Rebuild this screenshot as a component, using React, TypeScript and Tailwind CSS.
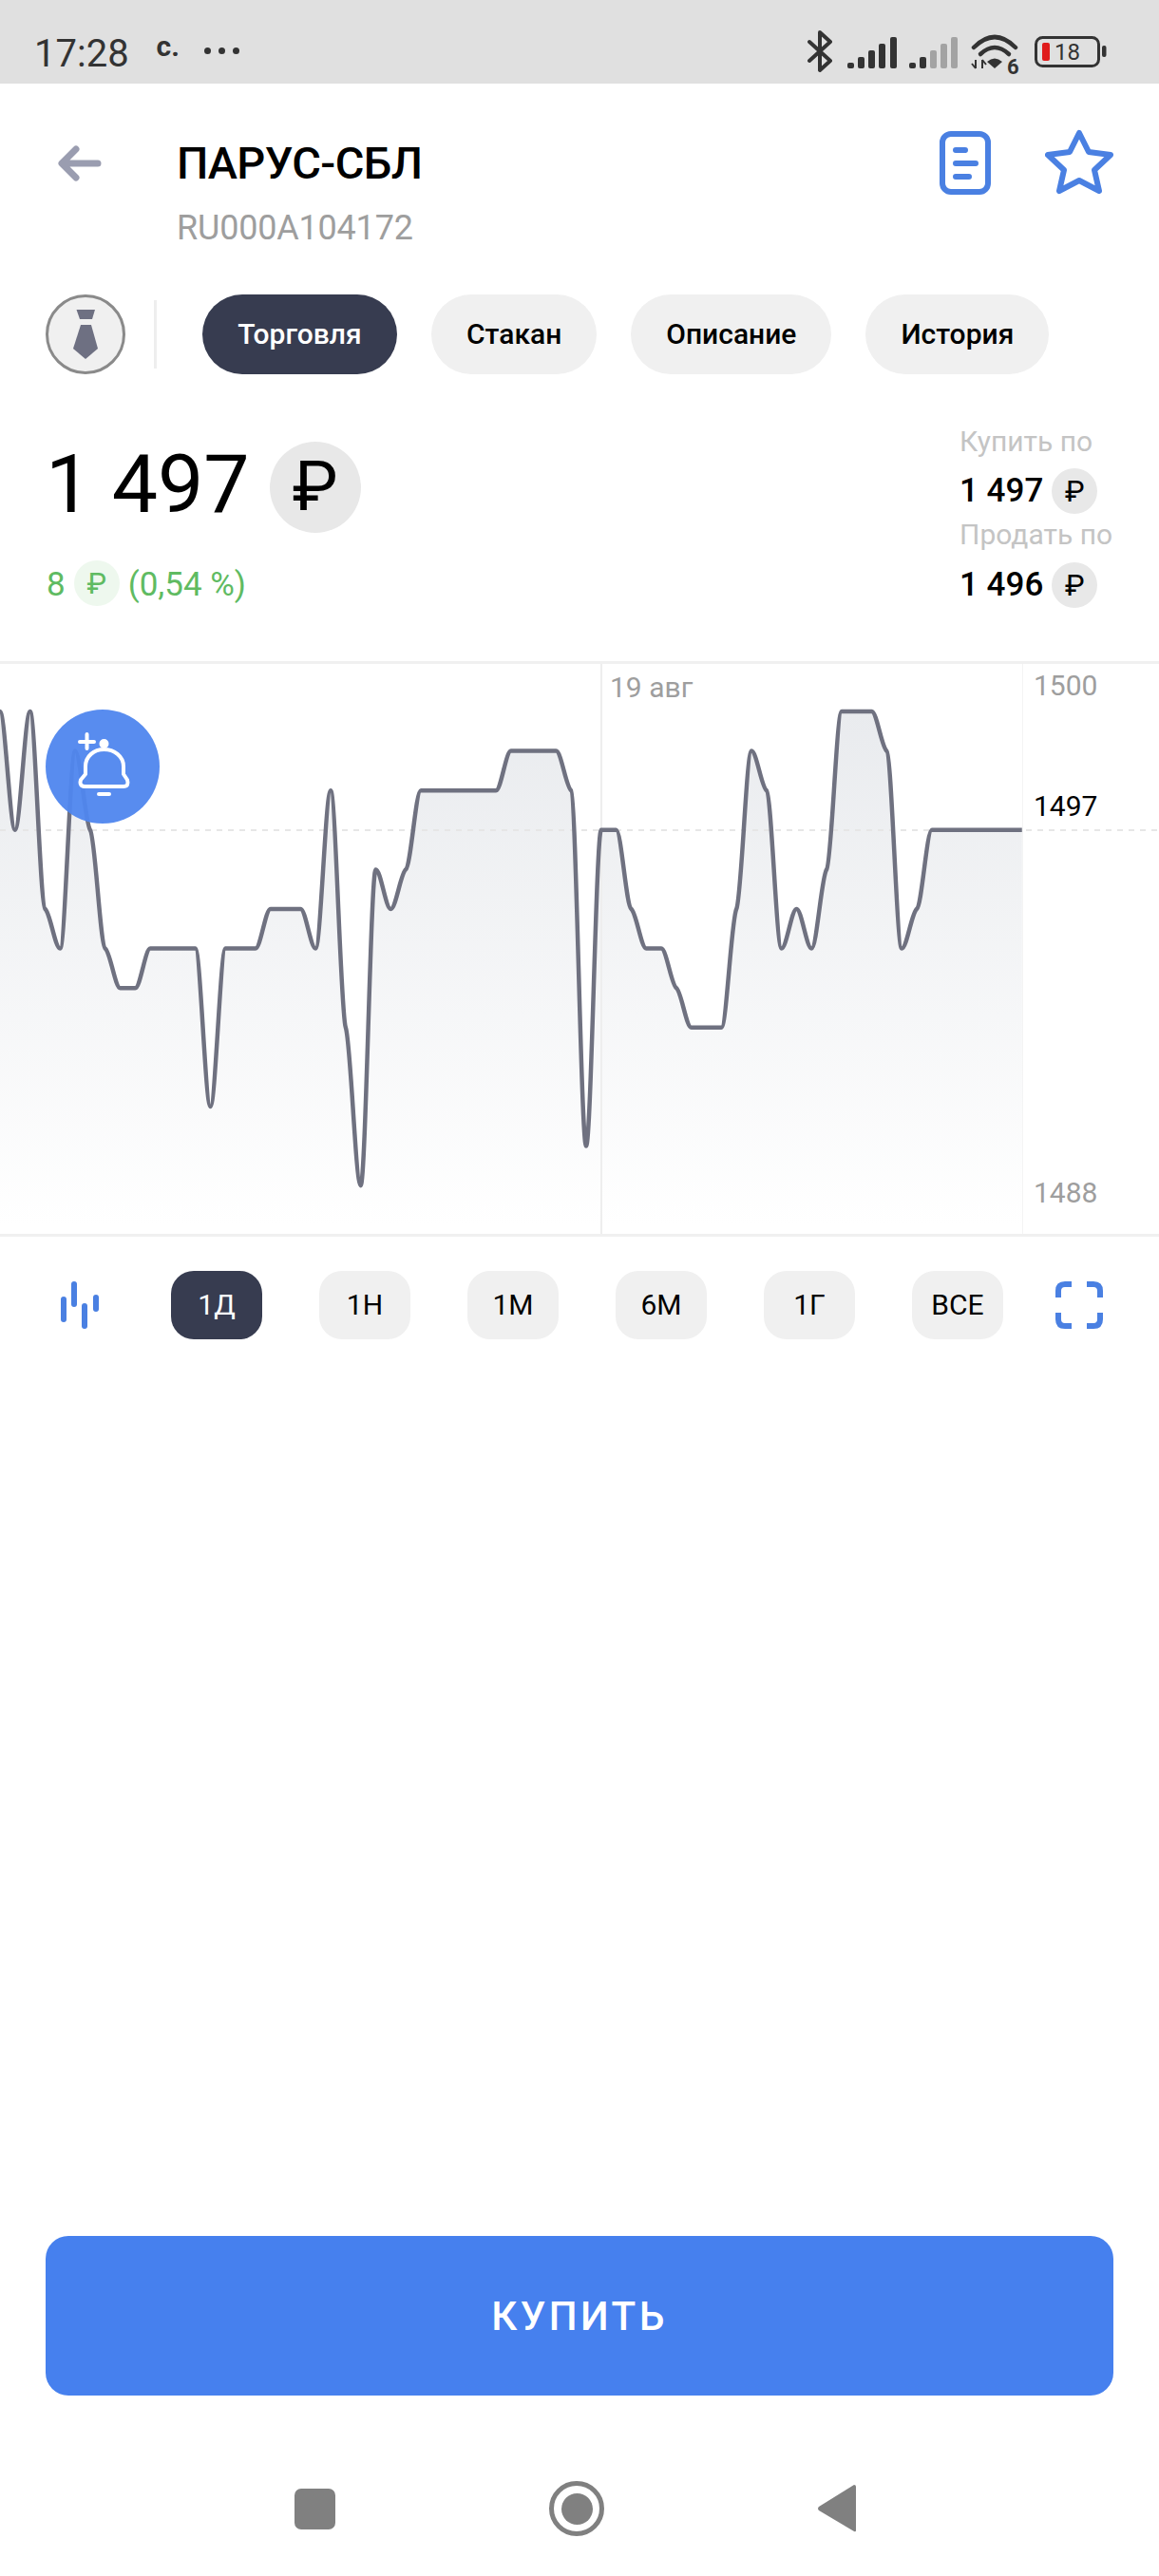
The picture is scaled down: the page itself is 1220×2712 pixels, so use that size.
const LEVELS = [
  0, 3, 0, 5, 6, 1, 3, 6, 7, 7, 6, 6, 6, 6, 10, 6, 6, 6, 5, 5, 5, 6, 2, 8, 12, 4, 5, 4, 2, 2, 2, 2, 2, 2, 1, 1, 1, 1, 2,
  11, 3, 3, 5, 6, 6, 7, 8, 8, 8, 5, 1, 2, 6, 5, 6, 4, 0, 0, 0, 1, 6, 5, 3, 3, 3, 3, 3, 3, 3,
];
const STEP = 15.82;
const linePath = buildPath();

// monotone curve through the price levels, coordinates are page pixels
function buildPath() {
  const pts = LEVELS.map((l, i) => [i * STEP, 749 + l * 41.6]);
  const slopes = pts.slice(1).map((p, i) => (p[1] - pts[i][1]) / STEP);
  const tangents = pts.map((_, i) => {
    if (i === 0 || i === pts.length - 1) return 0;
    const a = slopes[i - 1];
    const b = slopes[i];
    if (a * b <= 0) return 0;
    return Math.sign(a) * Math.min(Math.abs(a), Math.abs(b)) * 0.25;
  });
  let d = `M${pts[0][0]} ${pts[0][1]}`;
  for (let i = 1; i < pts.length; i++) {
    const dx = STEP / 3;
    d += ` C${pts[i - 1][0] + dx} ${pts[i - 1][1] + tangents[i - 1] * dx} ${pts[i][0] - dx} ${pts[i][1] - tangents[i] * dx} ${pts[i][0]} ${pts[i][1]}`;
  }
  return d;
}

function StatusIcons() {
  return (
    <svg width="320" height="50" viewBox="850 30 320 50" className="block">
      <path d="M852 44 L874 64 L863 74 L863 34 L874 44 L852 64" fill="none" stroke="#333" strokeWidth="4" strokeLinejoin="round" strokeLinecap="round" />
      <g fill="#333">
        <rect x="892" y="66" width="7" height="6" rx="2" />
        <rect x="903" y="60" width="7" height="12" rx="2" />
        <rect x="914" y="53" width="7" height="19" rx="2" />
        <rect x="925" y="46" width="7" height="26" rx="2" />
        <rect x="937" y="39" width="7" height="33" rx="2" />
        <rect x="957" y="66" width="7" height="6" rx="2" />
        <rect x="968" y="60" width="7" height="12" rx="2" />
      </g>
      <g fill="#a3a3a3">
        <rect x="979" y="53" width="7" height="19" rx="2" />
        <rect x="990" y="46" width="7" height="26" rx="2" />
        <rect x="1001" y="39" width="7" height="33" rx="2" />
      </g>
      <g fill="none" stroke="#333" strokeWidth="4.5" strokeLinecap="round">
        <path d="M1025 50 Q1047 28 1069 50" />
        <path d="M1032 57 Q1047 43 1062 57" />
      </g>
      <path d="M1039 65 Q1047 58 1055 65 L1047 72 Z" fill="#333" />
      <path d="M1027 63 V72 M1023 67 L1027 72 M1034 72 V63 M1034 63 L1038 68" fill="none" stroke="#333" strokeWidth="2" />
      <rect x="1090.5" y="39.5" width="66" height="30" rx="7" fill="none" stroke="#333" strokeWidth="3" />
      <rect x="1097" y="45" width="8" height="19" rx="2" fill="#e01b1b" />
      <rect x="1160" y="48" width="4.5" height="12" rx="2" fill="#333" />
    </svg>
  );
}

function TieIcon() {
  return (
    <svg width="26" height="52" viewBox="0 0 26 52" fill="#6e7082">
      <path d="M3.5 0 H23 L20 10 H7 Z" />
      <path d="M8 16 H19 L26 41 L13 52 L0 41 Z" />
    </svg>
  );
}

function Ruble({ size, className }: { size: "lg" | "md"; className: string }) {
  const box =
    size === "lg" ? "w-[96px] h-[96px] text-[72px]" : "w-[48px] h-[48px] text-[31px]";
  return (
    <span className={`flex items-center justify-center rounded-full leading-none ${box} ${className}`}>₽</span>
  );
}

function App() {
  const tabs = ["Стакан", "Описание", "История"];
  const periods = ["1Н", "1М", "6М", "1Г", "ВСЕ"];

  return (
    <div className="flex h-[2712px] w-[1220px] flex-col bg-white font-['Roboto',sans-serif] text-black">
      {/* status bar */}
      <div className="relative flex h-[88px] items-center bg-[#e0e0e0] text-[#333]">
        <span className="ml-[36px] mt-[24px] text-[40px] leading-[47px]">17:28</span>
        <span className="ml-[29px] mt-[10px] text-[30px] font-bold leading-[30px]">c.</span>
        <span className="ml-[26px] mt-[18px] flex gap-[8px]">
          <i className="h-[7px] w-[7px] rounded-full bg-[#333]" />
          <i className="h-[7px] w-[7px] rounded-full bg-[#333]" />
          <i className="h-[7px] w-[7px] rounded-full bg-[#333]" />
        </span>
        <div className="absolute left-[850px] top-[30px]">
          <StatusIcons />
        </div>
        <span className="absolute left-[1060px] top-[59px] text-[22px] font-bold leading-[24px]">6</span>
        <span className="absolute left-[1110px] top-[41px] text-[24px] leading-[28px]">18</span>
      </div>

      {/* header */}
      <div className="flex h-[222px] pl-[60px] pr-[48px] pt-[48px]">
        <svg width="48" height="40" viewBox="0 0 48 40" className="mt-[16px]" fill="none" stroke="#9a9db0" strokeWidth="7" strokeLinecap="round" strokeLinejoin="round">
          <path d="M43 20 H6 M20 5 L5 20 L20 35" />
        </svg>
        <div className="ml-[78px] mt-[8px]">
          <div className="text-[47px] font-medium leading-[56px] tracking-[-0.6px]">ПАРУС-СБЛ</div>
          <div className="mt-[18px] text-[36px] leading-[44px] tracking-[-0.2px] text-[#9e9e9e]">RU000A104172</div>
        </div>
        <div className="ml-auto flex items-start">
          <svg width="54" height="67" viewBox="0 0 54 67" className="mt-[2px]" fill="none" stroke="#4a80e2" strokeLinecap="round">
            <rect x="3" y="3" width="48" height="61" rx="9" strokeWidth="6" />
            <path d="M17 20 H27 M17 34 H38 M17 48 H31" strokeWidth="6" />
          </svg>
          <svg width="72" height="69" viewBox="0 0 72 69" className="ml-[57px]" fill="none" stroke="#4a80e2" strokeWidth="6" strokeLinejoin="round">
            <path d="M36 4 L46 24 L69 27 L52 43 L57 65 L36 54 L15 65 L20 43 L3 27 L26 24 Z" />
          </svg>
        </div>
      </div>

      {/* tabs */}
      <div className="flex items-center pl-[48px]">
        <div className="flex h-[84px] w-[84px] items-center justify-center rounded-full border-[3px] border-[#8a8a8a] bg-[#f0f0f0]">
          <TieIcon />
        </div>
        <div className="ml-[30px] h-[72px] w-[3px] bg-[#eeeeee]" />
        <div className="ml-[48px] flex gap-[36px] text-[30px] font-medium leading-[36px]">
          <div className="flex h-[84px] w-[205px] items-center justify-center rounded-full bg-[#373c50] text-white">Торговля</div>
          {tabs.map((t) => (
            <div key={t} className="flex h-[84px] items-center rounded-full bg-[#f0f0f0] px-[37px]">
              {t}
            </div>
          ))}
        </div>
      </div>

      {/* price */}
      <div className="flex justify-between pl-[48px] pr-[48px] pt-[53px]">
        <div className="mt-[18px]">
          <div className="flex items-center">
            <span className="pb-[6px] text-[86px] leading-[90px]">1 497</span>
            <Ruble size="lg" className="ml-[21px] bg-[#e8e8e8]" />
          </div>
          <div className="mt-[27px] flex items-center text-[35px] leading-[48px] text-[#5fbb62]">
            <span className="ml-[1px] mt-[4px]">8</span>
            <Ruble size="md" className="ml-[9px] bg-[#eef8ee]" />
            <span className="ml-[9px] mt-[4px]">(0,54 %)</span>
          </div>
        </div>
        <div className="w-[162px]">
          <div className="text-[30px] leading-[36px] text-[#c4c4c4]">Купить по</div>
          <div className="mt-[10px] flex items-center text-[35px] font-medium leading-[48px]">
            <span>1 497</span>
            <Ruble size="md" className="ml-[9px] bg-[#e8e8e8] font-normal" />
          </div>
          <div className="mt-[4px] whitespace-nowrap text-[30px] leading-[36px] text-[#c4c4c4]">Продать по</div>
          <div className="mt-[11px] flex items-center text-[35px] font-medium leading-[48px]">
            <span>1 496</span>
            <Ruble size="md" className="ml-[9px] bg-[#e8e8e8] font-normal" />
          </div>
        </div>
      </div>

      {/* chart */}
      <div className="relative mt-[56px] h-[606px] border-y-[3px] border-[#f0f0f0]">
        <svg width="1220" height="600" viewBox="0 699 1220 600" className="block">
          <defs>
            <linearGradient id="chartFill" gradientUnits="userSpaceOnUse" x1="0" y1="749" x2="0" y2="1290">
              <stop offset="0" stopColor="#e9ebee" />
              <stop offset="1" stopColor="#ffffff" />
            </linearGradient>
          </defs>
          <path d={`${linePath} L1076 1302 L0 1302 Z`} fill="url(#chartFill)" />
          <line x1="633" y1="699" x2="633" y2="1300" stroke="#eeeeee" strokeWidth="2" />
          <line x1="1076.5" y1="699" x2="1076.5" y2="1300" stroke="#f4f4f4" strokeWidth="1" />
          <line x1="0" y1="874" x2="1220" y2="874" stroke="#e6e6e6" strokeWidth="2" strokeDasharray="6 6" />
          <path d={linePath} fill="none" stroke="#6f7180" strokeWidth="4.5" />
        </svg>
        <span className="absolute left-[642px] top-[7px] text-[30px] leading-[36px] text-[#9e9e9e]">19 авг</span>
        <span className="absolute left-[1088px] top-[5px] text-[30px] leading-[36px] text-[#9e9e9e]">1500</span>
        <span className="absolute left-[1088px] top-[132px] text-[30px] leading-[36px]">1497</span>
        <span className="absolute left-[1088px] top-[539px] text-[30px] leading-[36px] text-[#9e9e9e]">1488</span>
        <div className="absolute left-[48px] top-[48px] flex h-[120px] w-[120px] items-center justify-center rounded-full bg-[#4f86ee]/95">
          <svg width="60" height="72" viewBox="78 771 60 72" fill="none" stroke="white" strokeWidth="4" strokeLinecap="round" strokeLinejoin="round">
            <path d="M84 781 H99 M91.5 773 V788" />
            <circle cx="109.5" cy="783" r="3" fill="white" />
            <path d="M90 815 V807 C90 796 99 789 109.5 789 C120 789 130 796 130 807 V815 L134 821 Q136 828 130 828 H90 Q83 828 85 821 Z" />
            <path d="M104 836 H115" />
          </svg>
        </div>
      </div>

      {/* period switcher */}
      <div className="mt-[36px] flex h-[72px] items-center pl-[64px] text-[30px] leading-[36px]">
        <svg width="40" height="50" viewBox="0 0 40 50" fill="#4a80e2">
          <rect x="0" y="16" width="6" height="27" rx="3" />
          <rect x="11" y="0" width="6" height="27" rx="3" />
          <rect x="22" y="23" width="6" height="27" rx="3" />
          <rect x="34" y="14" width="6" height="18" rx="3" />
        </svg>
        <div className="ml-[76px] flex gap-[60px]">
          <div className="flex h-[72px] w-[96px] items-center justify-center rounded-[24px] bg-[#373c50] text-white">1Д</div>
          {periods.map((p) => (
            <div key={p} className="flex h-[72px] w-[96px] items-center justify-center rounded-[24px] bg-[#f0f0f0]">
              {p}
            </div>
          ))}
        </div>
        <svg width="50" height="50" viewBox="0 0 50 50" className="ml-[55px]" fill="none" stroke="#4a80e2" strokeWidth="6">
          <path d="M3 17 V10 Q3 3 10 3 H17 M33 3 H40 Q47 3 47 10 V17 M47 33 V40 Q47 47 40 47 H33 M17 47 H10 Q3 47 3 40 V33" />
        </svg>
      </div>

      {/* buy */}
      <div className="mx-[48px] mt-auto flex h-[168px] items-center justify-center rounded-[24px] bg-[#4680ee] text-[42px] font-medium tracking-[3.5px] text-white">
        КУПИТЬ
      </div>

      {/* nav bar */}
      <div className="flex h-[190px] items-center gap-[225px] pl-[310px] pt-[48px]">
        <div className="h-[43px] w-[43px] rounded-[7px] bg-[#808080]" />
        <div className="flex h-[58px] w-[58px] items-center justify-center rounded-full border-[5px] border-[#808080]">
          <div className="h-[33px] w-[33px] rounded-full bg-[#808080]" />
        </div>
        <svg width="40" height="50" viewBox="0 0 40 50" fill="#808080">
          <path d="M38 0 Q40 0 40 2 V48 Q40 50 38 49 L1 27 Q-1 25 1 23 Z" />
        </svg>
      </div>
    </div>
  );
}

export default App;
